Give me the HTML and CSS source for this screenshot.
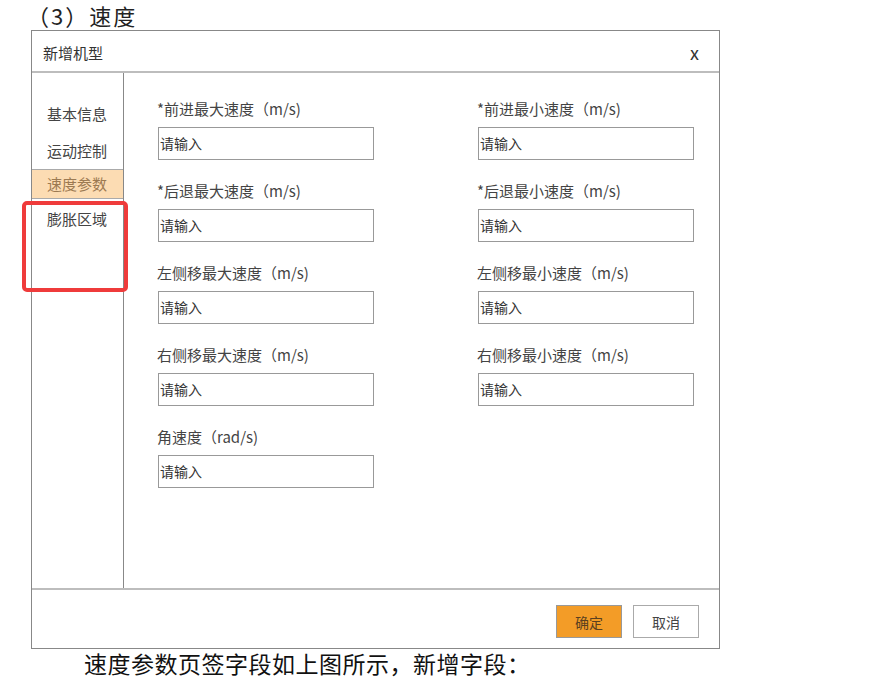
FILE: index.html
```html
<!DOCTYPE html>
<html lang="zh-CN">
<head>
    <meta charset="UTF-8">
    <title>速度参数</title>
    <link rel="stylesheet" href="styles.css">
</head>
<body>
    <div class="heading">（3）速度</div>

    <div class="dialog">
        <div class="dialog-header">
            <span class="dialog-title">新增机型</span>
            <span class="close">x</span>
        </div>

        <div class="dialog-body">
            <ul class="side-nav">
                <li>基本信息</li>
                <li>运动控制</li>
                <li class="active">速度参数</li>
                <li>膨胀区域</li>
            </ul>

            <form class="form-grid">
                <div class="field">
                    <label>*前进最大速度（m/s)</label>
                    <input type="text" placeholder="请输入">
                </div>
                <div class="field">
                    <label>*前进最小速度（m/s)</label>
                    <input type="text" placeholder="请输入">
                </div>
                <div class="field">
                    <label>*后退最大速度（m/s)</label>
                    <input type="text" placeholder="请输入">
                </div>
                <div class="field">
                    <label>*后退最小速度（m/s)</label>
                    <input type="text" placeholder="请输入">
                </div>
                <div class="field">
                    <label>左侧移最大速度（m/s)</label>
                    <input type="text" placeholder="请输入">
                </div>
                <div class="field">
                    <label>左侧移最小速度（m/s)</label>
                    <input type="text" placeholder="请输入">
                </div>
                <div class="field">
                    <label>右侧移最大速度（m/s)</label>
                    <input type="text" placeholder="请输入">
                </div>
                <div class="field">
                    <label>右侧移最小速度（m/s)</label>
                    <input type="text" placeholder="请输入">
                </div>
                <div class="field">
                    <label>角速度（rad/s)</label>
                    <input type="text" placeholder="请输入">
                </div>
            </form>
        </div>

        <div class="dialog-footer">
            <button class="btn btn-primary">确定</button>
            <button class="btn">取消</button>
        </div>

        <div class="highlight-box"></div>
    </div>

    <p class="note">速度参数页签字段如上图所示，新增字段：</p>
</body>
</html>
```

FILE: styles.css
```css
body {
    margin: 0;
    background: white;
    font-family: "Noto Sans CJK SC", "Noto Sans", sans-serif;
    color: #333;
}
.heading {
    height: 30px;
    line-height: 30px;
    padding-left: 27px;
    font-size: 22px;
    letter-spacing: 2px;
    color: #222;
}
.dialog {
    position: relative;
    width: 687px;
    height: 617px;
    margin-left: 31px;
    border: 1px solid #888;
    display: flex;
    flex-direction: column;
}
.dialog-header {
    height: 42px;
    border-bottom: 2px solid #bdbdbd;
    display: flex;
    align-items: center;
    justify-content: space-between;
    padding: 2px 20px 0 11px;
    box-sizing: border-box;
}
.dialog-title {
    font-size: 15px;
    color: #333;
}
.close {
    font-size: 18px;
    color: #333;
}
.dialog-body {
    height: 515px;
    display: flex;
}
.side-nav {
    list-style: none;
    margin: 0;
    padding: 26px 0 0;
    width: 91px;
    border-right: 1px solid #888;
    display: flex;
    flex-direction: column;
    gap: 5px;
}
.side-nav li {
    height: 30px;
    line-height: 30px;
    padding-left: 15px;
    font-size: 15px;
    color: #444;
    box-sizing: border-box;
}
.side-nav li:nth-child(2) {
    line-height: 33px;
}
.side-nav li.active {
    background: #fcdcb3;
    border-top: 1px solid #aaa;
    border-bottom: 1px solid #aaa;
    line-height: 28px;
    color: #9c7a52;
}
.form-grid {
    display: grid;
    grid-template-columns: 320px 216px;
    row-gap: 21px;
    align-content: start;
    padding: 26px 0 0 34px;
}
.field label {
    display: block;
    height: 20px;
    line-height: 20px;
    margin-bottom: 8px;
    margin-left: -1px;
    font-size: 15px;
    color: #444;
}
.field input {
    display: block;
    width: 216px;
    height: 33px;
    box-sizing: border-box;
    border: 1px solid #999;
    padding: 0 2px 2px 1px;
    font-family: inherit;
    font-size: 14px;
    outline: none;
}
.field input::placeholder {
    color: #333;
}
.dialog-footer {
    flex: 1;
    border-top: 2px solid #bdbdbd;
    display: flex;
    justify-content: flex-end;
    align-items: flex-start;
    gap: 11px;
    padding: 15px 20px 0 0;
}
.btn {
    width: 66px;
    height: 33px;
    border: 1px solid #aaa;
    background: white;
    font-family: inherit;
    font-size: 14px;
    color: #444;
    cursor: pointer;
}
.btn-primary {
    background: #f39c27;
    border-color: #999;
    color: #5a4020;
}
.highlight-box {
    position: absolute;
    left: -10px;
    top: 170px;
    width: 98px;
    height: 83px;
    border: 4px solid #ef3b3b;
    border-radius: 5px;
}
.note {
    margin: 0 0 0 84px;
    line-height: 28px;
    font-size: 23px;
    letter-spacing: 0.5px;
    color: #111;
}
```
